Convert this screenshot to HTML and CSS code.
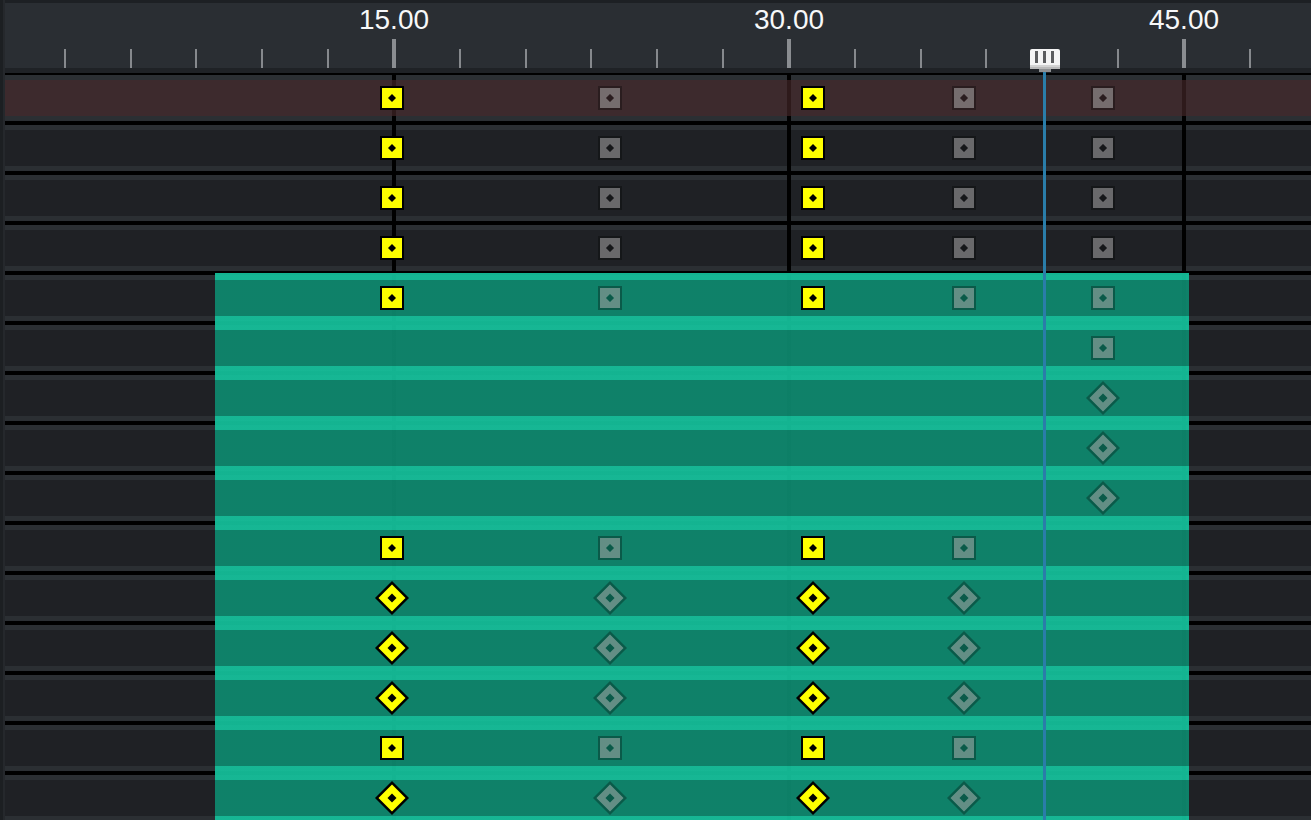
FILE: index.html
```html
<!DOCTYPE html>
<html lang="en">
<head>
<meta charset="utf-8">
<title>Timeline</title>
<link rel="stylesheet" href="styles.css">
</head>
<body>
<svg class="defs" aria-hidden="true">
  <symbol id="sq-y" viewBox="0 0 24 24">
    <rect width="24" height="24" fill="#000"/>
    <rect x="2" y="2" width="20" height="20" fill="#ffff00"/>
    <path d="M12 8L16 12L12 16L8 12Z" fill="#000"/>
  </symbol>
  <symbol id="sq-g" viewBox="0 0 24 24">
    <path fill-rule="evenodd" d="M0 0H24V24H0Z M2 2V22H22V2Z" fill="#000" fill-opacity="0.3"/>
    <path fill-rule="evenodd" d="M2 2H22V22H2Z M12 8L8 12L12 16L16 12Z" fill="#989696" fill-opacity="0.62"/>
    <path d="M12 8L16 12L12 16L8 12Z" fill="#000" fill-opacity="0.3"/>
  </symbol>
  <symbol id="dm-y" viewBox="0 0 34 34">
    <path d="M17 0L34 17L17 34L0 17Z" fill="#000"/>
    <path d="M17 3.5L30.5 17L17 30.5L3.5 17Z" fill="#ffff00"/>
    <path d="M17 12.5L21.5 17L17 21.5L12.5 17Z" fill="#000"/>
  </symbol>
  <symbol id="dm-g" viewBox="0 0 34 34">
    <path fill-rule="evenodd" d="M17 0L34 17L17 34L0 17Z M17 3.5L3.5 17L17 30.5L30.5 17Z" fill="#000" fill-opacity="0.3"/>
    <path fill-rule="evenodd" d="M17 3.5L30.5 17L17 30.5L3.5 17Z M17 12.5L12.5 17L17 21.5L21.5 17Z" fill="#989696" fill-opacity="0.62"/>
    <path d="M17 12.5L21.5 17L17 21.5L12.5 17Z" fill="#000" fill-opacity="0.3"/>
  </symbol>
</svg>

<div class="timeline">
  <div class="ruler">
    <div class="minor-ticks"></div>
    <div class="major-tick m1"></div>
    <div class="major-tick m2"></div>
    <div class="major-tick m3"></div>
    <div class="label m1">15.00</div>
    <div class="label m2">30.00</div>
    <div class="label m3">45.00</div>
  </div>

  <div class="tracks">
    <div class="row sel"><div class="lane"></div></div>
    <div class="row"><div class="lane"></div></div>
    <div class="row"><div class="lane"></div></div>
    <div class="row"><div class="lane"></div></div>
    <div class="row"><div class="lane"></div></div>
    <div class="row"><div class="lane"></div></div>
    <div class="row"><div class="lane"></div></div>
    <div class="row"><div class="lane"></div></div>
    <div class="row"><div class="lane"></div></div>
    <div class="row"><div class="lane"></div></div>
    <div class="row"><div class="lane"></div></div>
    <div class="row"><div class="lane"></div></div>
    <div class="row"><div class="lane"></div></div>
    <div class="row"><div class="lane"></div></div>
    <div class="row"><div class="lane"></div></div>

    <div class="gridline g1"></div>
    <div class="gridline g2"></div>
    <div class="gridline g3"></div>

    <div class="clip"></div>

    <div class="keys">
      <div class="krow">
        <span class="k t1"><svg class="sq"><use href="#sq-y"/></svg></span>
        <span class="k t2"><svg class="sq"><use href="#sq-g"/></svg></span>
        <span class="k t3"><svg class="sq"><use href="#sq-y"/></svg></span>
        <span class="k t4"><svg class="sq"><use href="#sq-g"/></svg></span>
        <span class="k t5"><svg class="sq"><use href="#sq-g"/></svg></span>
      </div>
      <div class="krow">
        <span class="k t1"><svg class="sq"><use href="#sq-y"/></svg></span>
        <span class="k t2"><svg class="sq"><use href="#sq-g"/></svg></span>
        <span class="k t3"><svg class="sq"><use href="#sq-y"/></svg></span>
        <span class="k t4"><svg class="sq"><use href="#sq-g"/></svg></span>
        <span class="k t5"><svg class="sq"><use href="#sq-g"/></svg></span>
      </div>
      <div class="krow">
        <span class="k t1"><svg class="sq"><use href="#sq-y"/></svg></span>
        <span class="k t2"><svg class="sq"><use href="#sq-g"/></svg></span>
        <span class="k t3"><svg class="sq"><use href="#sq-y"/></svg></span>
        <span class="k t4"><svg class="sq"><use href="#sq-g"/></svg></span>
        <span class="k t5"><svg class="sq"><use href="#sq-g"/></svg></span>
      </div>
      <div class="krow">
        <span class="k t1"><svg class="sq"><use href="#sq-y"/></svg></span>
        <span class="k t2"><svg class="sq"><use href="#sq-g"/></svg></span>
        <span class="k t3"><svg class="sq"><use href="#sq-y"/></svg></span>
        <span class="k t4"><svg class="sq"><use href="#sq-g"/></svg></span>
        <span class="k t5"><svg class="sq"><use href="#sq-g"/></svg></span>
      </div>
      <div class="krow">
        <span class="k t1"><svg class="sq"><use href="#sq-y"/></svg></span>
        <span class="k t2"><svg class="sq"><use href="#sq-g"/></svg></span>
        <span class="k t3"><svg class="sq"><use href="#sq-y"/></svg></span>
        <span class="k t4"><svg class="sq"><use href="#sq-g"/></svg></span>
        <span class="k t5"><svg class="sq"><use href="#sq-g"/></svg></span>
      </div>
      <div class="krow">
        <span class="k t5"><svg class="sq"><use href="#sq-g"/></svg></span>
      </div>
      <div class="krow">
        <span class="k t5"><svg class="dm"><use href="#dm-g"/></svg></span>
      </div>
      <div class="krow">
        <span class="k t5"><svg class="dm"><use href="#dm-g"/></svg></span>
      </div>
      <div class="krow">
        <span class="k t5"><svg class="dm"><use href="#dm-g"/></svg></span>
      </div>
      <div class="krow">
        <span class="k t1"><svg class="sq"><use href="#sq-y"/></svg></span>
        <span class="k t2"><svg class="sq"><use href="#sq-g"/></svg></span>
        <span class="k t3"><svg class="sq"><use href="#sq-y"/></svg></span>
        <span class="k t4"><svg class="sq"><use href="#sq-g"/></svg></span>
      </div>
      <div class="krow">
        <span class="k t1"><svg class="dm"><use href="#dm-y"/></svg></span>
        <span class="k t2"><svg class="dm"><use href="#dm-g"/></svg></span>
        <span class="k t3"><svg class="dm"><use href="#dm-y"/></svg></span>
        <span class="k t4"><svg class="dm"><use href="#dm-g"/></svg></span>
      </div>
      <div class="krow">
        <span class="k t1"><svg class="dm"><use href="#dm-y"/></svg></span>
        <span class="k t2"><svg class="dm"><use href="#dm-g"/></svg></span>
        <span class="k t3"><svg class="dm"><use href="#dm-y"/></svg></span>
        <span class="k t4"><svg class="dm"><use href="#dm-g"/></svg></span>
      </div>
      <div class="krow">
        <span class="k t1"><svg class="dm"><use href="#dm-y"/></svg></span>
        <span class="k t2"><svg class="dm"><use href="#dm-g"/></svg></span>
        <span class="k t3"><svg class="dm"><use href="#dm-y"/></svg></span>
        <span class="k t4"><svg class="dm"><use href="#dm-g"/></svg></span>
      </div>
      <div class="krow">
        <span class="k t1"><svg class="sq"><use href="#sq-y"/></svg></span>
        <span class="k t2"><svg class="sq"><use href="#sq-g"/></svg></span>
        <span class="k t3"><svg class="sq"><use href="#sq-y"/></svg></span>
        <span class="k t4"><svg class="sq"><use href="#sq-g"/></svg></span>
      </div>
      <div class="krow">
        <span class="k t1"><svg class="dm"><use href="#dm-y"/></svg></span>
        <span class="k t2"><svg class="dm"><use href="#dm-g"/></svg></span>
        <span class="k t3"><svg class="dm"><use href="#dm-y"/></svg></span>
        <span class="k t4"><svg class="dm"><use href="#dm-g"/></svg></span>
      </div>
    </div>
  </div>

  <div class="playhead">
    <div class="grip"><span class="bar"></span><span class="bar"></span><span class="bar"></span></div>
    <div class="tab"></div>
    <div class="line"></div>
  </div>
</div>
</body>
</html>
```

FILE: styles.css
```css
* { box-sizing: border-box; }

html, body {
  margin: 0;
  padding: 0;
  background: #1c1f22;
}

.defs {
  position: absolute;
  width: 0;
  height: 0;
  overflow: hidden;
}

.timeline {
  position: relative;
  width: 1311px;
  height: 820px;
  overflow: hidden;
  background: linear-gradient(to right, #1c1f22 0 3px, #25282c 3px 5px, #1c1f22 5px);
  font-family: "Liberation Sans", Arial, sans-serif;
}

/* ---------- ruler ---------- */
.ruler {
  position: relative;
  margin-left: 5px;
  height: 73px;
  border-top: 3px solid #1d2024;
  border-bottom: 5px solid #1f2226;
  background: #2a2e33;
}

.minor-ticks {
  position: absolute;
  left: -7px;
  top: 46px;
  width: 1330px;
  height: 19px;
  background: repeating-linear-gradient(to right, #86898d 0 2px, transparent 2px 65.8333px);
}

.major-tick {
  position: absolute;
  top: 36px;
  width: 4px;
  height: 29px;
  background: #8a8d91;
}
.major-tick.m1 { left: 387px; }
.major-tick.m2 { left: 782px; }
.major-tick.m3 { left: 1177px; }

.label {
  position: absolute;
  top: 3px;
  font-size: 28px;
  line-height: 28px;
  color: #f7f8f9;
  transform: translateX(-50%);
  white-space: nowrap;
}
.label.m1 { left: 389px; }
.label.m2 { left: 784px; }
.label.m3 { left: 1179px; }

/* ---------- tracks ---------- */
.tracks {
  position: relative;
  margin-left: 5px;
  border-top: 2px solid #000;
}

.row {
  height: 50px;
  padding: 5px 0 9px;
  background: linear-gradient(to bottom,
    #2b2f33 0 5px,
    #1f2125 5px 41px,
    #2b2f33 41px 46px,
    #000 46px 50px);
}

.lane {
  height: 36px;
}

.row.sel .lane {
  position: relative;
  z-index: 2;
  background: rgba(91, 51, 53, 0.5);
}

.gridline {
  position: absolute;
  top: 0;
  bottom: 0;
  width: 4px;
  background: #000;
  z-index: 1;
}
.gridline.g1 { left: 387px; }
.gridline.g2 { left: 782px; }
.gridline.g3 { left: 1177px; }

.clip {
  position: absolute;
  left: 210px;
  top: 198px;
  width: 974px;
  bottom: 0;
  z-index: 3;
  background: repeating-linear-gradient(to bottom,
    rgba(21, 191, 154, 0.94) 0 7px,
    rgba(14, 135, 109, 0.94) 7px 43px,
    rgba(21, 191, 154, 0.94) 43px 50px);
}

.keys {
  position: absolute;
  top: 0;
  left: 0;
  right: 0;
  z-index: 4;
}

.krow {
  position: relative;
  height: 50px;
}

.k {
  position: absolute;
  top: 23px;
  transform: translate(-50%, -50%);
  line-height: 0;
}
.k.t1 { left: 387px; }
.k.t2 { left: 605px; }
.k.t3 { left: 808px; }
.k.t4 { left: 959px; }
.k.t5 { left: 1098px; }

.k .sq { display: block; width: 24px; height: 24px; }
.k .dm { display: block; width: 34px; height: 34px; }

/* ---------- playhead ---------- */
.playhead {
  position: absolute;
  left: 1030px;
  top: 49px;
  bottom: 0;
  width: 30px;
  z-index: 10;
  display: flex;
  flex-direction: column;
}

.grip {
  height: 20px;
  border-radius: 2px 2px 0 0;
  background: linear-gradient(to bottom, #f4f4f4 0 16px, #d2d2d2 16px 18px, #b9b9b9 18px 20px);
  display: flex;
  gap: 5px;
  padding: 2px 0 0 5px;
}

.bar {
  width: 3px;
  height: 12px;
  background: #5b5c5e;
}

.tab {
  width: 12px;
  height: 3px;
  margin-left: 9px;
  background: #8e9092;
}

.line {
  flex: 1;
  width: 3px;
  margin-left: 13px;
  background: #2a7da9;
}
```
